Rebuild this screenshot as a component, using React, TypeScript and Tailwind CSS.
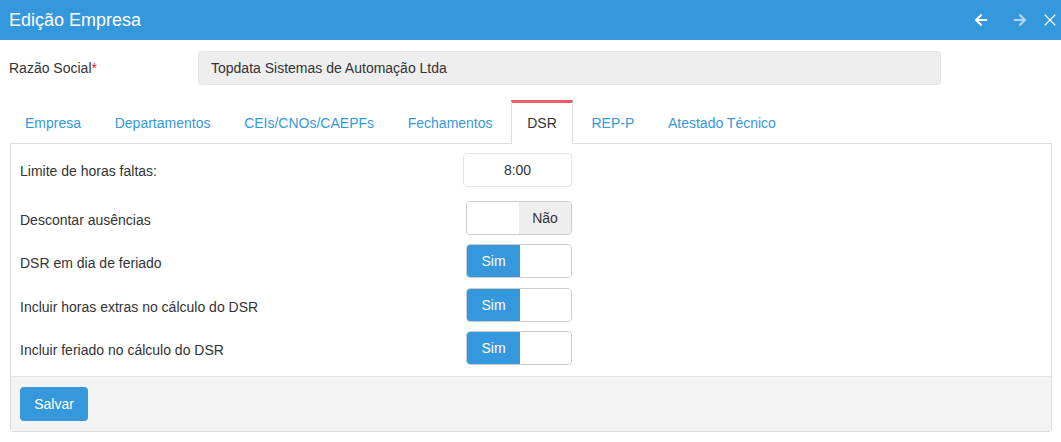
import { FaArrowLeft, FaArrowRight } from "react-icons/fa";
import { X } from "lucide-react";

const tabs = [
  "Empresa",
  "Departamentos",
  "CEIs/CNOs/CAEPFs",
  "Fechamentos",
  "DSR",
  "REP-P",
  "Atestado Técnico",
];

function Toggle({ on }: { on: boolean }) {
  return (
    <div className="flex h-[34px] w-[106px] overflow-hidden rounded-[4px] border border-[#ccc] text-[14px]">
      {on ? (
        <>
          <div className="flex w-[53px] items-center justify-center bg-[#3598dc] text-white">
            Sim
          </div>
          <div className="flex-1 bg-white" />
        </>
      ) : (
        <>
          <div className="w-[52px] bg-white" />
          <div className="flex flex-1 items-center justify-center bg-[#eee] text-[#333]">
            Não
          </div>
        </>
      )}
    </div>
  );
}

function Row({
  label,
  className,
  labelClass,
  children,
}: {
  label: string;
  className?: string;
  labelClass?: string;
  children: React.ReactNode;
}) {
  return (
    <div className={`flex h-[34px] items-center ${className ?? ""}`}>
      <div className={`w-[443px] text-[14px] text-[#333] ${labelClass ?? "pt-[5px]"}`}>
        {label}
      </div>
      {children}
    </div>
  );
}

export default function App() {
  return (
    <div
      className="h-[442px] w-[1061px] bg-white"
      style={{ fontFamily: '"Liberation Sans", Arial, sans-serif' }}
    >
      <div className="flex h-[40px] items-center bg-[#3598dc] pl-[9px] text-white">
        <h1 className="flex-1 text-[18px] leading-none">Edição Empresa</h1>
        <FaArrowLeft className="mr-[25px] h-[14px] w-[14px]" />
        <FaArrowRight className="mr-[13px] h-[14px] w-[14px] opacity-60" />
        <X className="mr-[1px] h-[20px] w-[20px]" strokeWidth={1.3} />
      </div>

      <div className="mt-[11px] flex items-center">
        <label className="w-[198px] pl-[9px] text-[14px] text-[#333]">
          Razão Social<span className="text-[#e02222]">*</span>
        </label>
        <div className="flex h-[34px] w-[743px] items-center rounded-[4px] border border-[#e5e5e5] bg-[#eee] px-[12px] text-[14px] text-[#333]">
          Topdata Sistemas de Automação Ltda
        </div>
      </div>

      <div className="ml-[10px] mr-[9px] mt-[15px]">
        <ul className="flex border-b border-[#ddd]">
          {tabs.map((t) => {
            const active = t === "DSR";
            return (
              <li key={t} className="mr-[3.7px] -mb-px">
                {active ? (
                  <span className="block border-x border-t-[3px] border-x-[#ddd] border-t-[#ef5a64] bg-white px-[15px] pt-[10px] pb-[11px] text-[14px] leading-[20px] text-[#333]">
                    {t}
                  </span>
                ) : (
                  <span className="block border-t-[3px] border-transparent px-[15px] pt-[10px] pb-[10px] text-[14px] leading-[20px] text-[#3598dc]">
                    {t}
                  </span>
                )}
              </li>
            );
          })}
        </ul>

        <div className="rounded-b-[4px] border-x border-b border-[#ddd]">
          <div className="pl-[9px] pr-[10px] pt-[9px] pb-[11px]">
            <Row label="Limite de horas faltas:" labelClass="pt-[2px]">
              <div className="flex h-[34px] w-[109px] items-center justify-center rounded-[4px] border border-[#e5e5e5] bg-white text-[14px] text-[#333]">
                8:00
              </div>
            </Row>
            <Row label="Descontar ausências" className="mt-[14px]">
              <div className="ml-[3px]">
                <Toggle on={false} />
              </div>
            </Row>
            <Row label="DSR em dia de feriado" className="mt-[9px]">
              <div className="ml-[3px]">
                <Toggle on />
              </div>
            </Row>
            <Row label="Incluir horas extras no cálculo do DSR" className="mt-[10px]">
              <div className="ml-[3px]">
                <Toggle on />
              </div>
            </Row>
            <Row label="Incluir feriado no cálculo do DSR" className="mt-[9px]">
              <div className="ml-[3px]">
                <Toggle on />
              </div>
            </Row>
          </div>
          <div className="h-[55px] border-t border-[#e5e5e5] bg-[#f3f3f3] pl-[9px] pt-[10px]">
            <button className="h-[34px] w-[68px] rounded-[4px] bg-[#3598dc] text-[14px] text-white">
              Salvar
            </button>
          </div>
        </div>
      </div>
    </div>
  );
}
